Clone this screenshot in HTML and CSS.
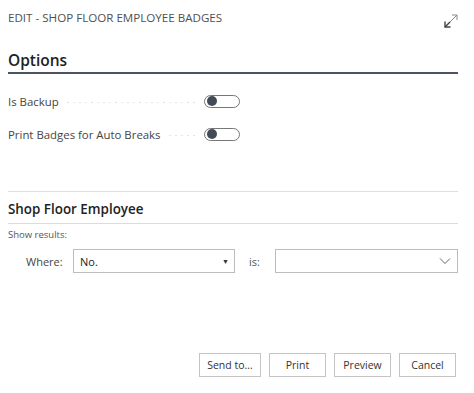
FILE: index.html
```html
<!DOCTYPE html>
<html>
<head>
<meta charset="utf-8">
<link rel="stylesheet" href="styles.css">
</head>
<body>
<div class="page">
  <header class="top">
    <div class="title">EDIT - SHOP FLOOR EMPLOYEE BADGES</div>
    <svg class="expand" width="18" height="18" viewBox="0 0 18 18">
      <path d="M3 15 L15 3" stroke="#8a8a8a" stroke-width="1" fill="none"/>
      <path d="M10 3 H15 V8" stroke="#8a8a8a" stroke-width="1" fill="none"/>
      <path d="M3 15 L8 10" stroke="#444" stroke-width="1.4" fill="none"/>
      <path d="M3 9.5 V15 H8.5" stroke="#444" stroke-width="1.4" fill="none"/>
    </svg>
  </header>

  <section class="options">
    <h2 class="sec-title">Options</h2>
    <div class="field">
      <span class="label">Is Backup</span>
      <span class="leader"></span>
      <span class="toggle"><span class="knob"></span></span>
    </div>
    <div class="field">
      <span class="label">Print Badges for Auto Breaks</span>
      <span class="leader"></span>
      <span class="toggle"><span class="knob"></span></span>
    </div>
  </section>

  <section class="filter">
    <h3 class="filter-title">Shop Floor Employee</h3>
    <div class="show">Show results:</div>
    <div class="where-row">
      <span class="where-label">Where:</span>
      <div class="select">
        <span>No.</span>
        <span class="tri">&#9660;</span>
      </div>
      <span class="is-label">is:</span>
      <div class="input">
        <svg width="12" height="8" viewBox="0 0 12 8"><path d="M1 1.5 L6 6.5 L11 1.5" stroke="#666" stroke-width="1" fill="none"/></svg>
      </div>
    </div>
  </section>

  <footer class="actions">
    <button class="btn send">Send to...</button>
    <button class="btn">Print</button>
    <button class="btn">Preview</button>
    <button class="btn">Cancel</button>
  </footer>
</div>
</body>
</html>
```

FILE: styles.css
```css
html, body {
  margin: 0;
  padding: 0;
  background: #fff;
}
.page {
  width: 474px;
  height: 393px;
  box-sizing: border-box;
  padding: 0 16px 0 8px;
  font-family: "Open Sans", "Noto Sans", sans-serif;
  color: #333;
  display: flex;
  flex-direction: column;
}
.top {
  display: flex;
  justify-content: space-between;
  align-items: flex-start;
  padding-top: 10px;
  height: 30px;
}
.title {
  font-size: 11.6px;
  color: #505050;
  line-height: 16px;
}
.expand {
  margin-top: 2px;
  margin-right: -2px;
}
.sec-title {
  margin: 9px 0 0 0;
  font-size: 15.5px;
  font-weight: 600;
  color: #222;
  line-height: 22px;
  padding-bottom: 1px;
  border-bottom: 2px solid #4d5561;
}
.options {
  border-bottom: 1px solid #e0e0e0;
  padding-bottom: 47px;
}
.field {
  display: flex;
  align-items: center;
  height: 20px;
  width: 232px;
}
.field:first-of-type { margin-top: 17px; }
.field + .field { margin-top: 13px; }
.label {
  font-size: 11.4px;
  color: #444;
  white-space: nowrap;
}
.leader {
  flex: 1;
  margin: 0 8px 0 6px;
  height: 1px;
  background-image: radial-gradient(circle, #c6c6c6 0.6px, transparent 0.8px);
  background-size: 6px 2px;
  background-repeat: repeat-x;
  position: relative;
  top: 1px;
}
.toggle {
  box-sizing: border-box;
  width: 36px;
  height: 13px;
  border: 1px solid #777;
  border-radius: 7px;
  display: flex;
  align-items: center;
  padding: 0 1px 0 2px;
  flex: none;
}
.knob {
  width: 10px;
  height: 10px;
  border-radius: 50%;
  background: #434b57;
}
.filter-title {
  margin: 7px 0 0 0;
  font-size: 13.4px;
  font-weight: 600;
  color: #222;
  line-height: 20px;
  padding-bottom: 4px;
  border-bottom: 1px solid #dcdcdc;
}
.show {
  font-size: 9.5px;
  color: #555;
  margin-top: 4px;
  line-height: 14px;
}
.where-row {
  display: flex;
  align-items: center;
  margin-top: 7px;
  height: 24px;
}
.where-label {
  font-size: 11px;
  color: #444;
  margin-left: 18px;
  width: 47px;
}
.select {
  box-sizing: border-box;
  width: 162px;
  height: 24px;
  border: 1px solid #bdbdbd;
  display: flex;
  align-items: center;
  justify-content: space-between;
  padding: 0 5px 0 6px;
  font-size: 11px;
  color: #222;
}
.tri {
  font-size: 7px;
  color: #333;
}
.is-label {
  font-size: 11px;
  color: #555;
  margin-left: 14px;
  width: 26px;
}
.input {
  box-sizing: border-box;
  flex: 1;
  height: 24px;
  border: 1px solid #bdbdbd;
  display: flex;
  align-items: center;
  justify-content: flex-end;
  padding-right: 6px;
}
.actions {
  margin-top: auto;
  margin-bottom: 16px;
  display: flex;
  justify-content: flex-end;
  gap: 8px;
  margin-right: 2px;
}
.btn {
  box-sizing: border-box;
  width: 57px;
  height: 24px;
  background: #fff;
  border: 1px solid #c4c4c4;
  font-family: "Open Sans", "Noto Sans", sans-serif;
  font-size: 10.5px;
  color: #333;
  padding: 0;
}
.btn.send { width: 62px; }
```
